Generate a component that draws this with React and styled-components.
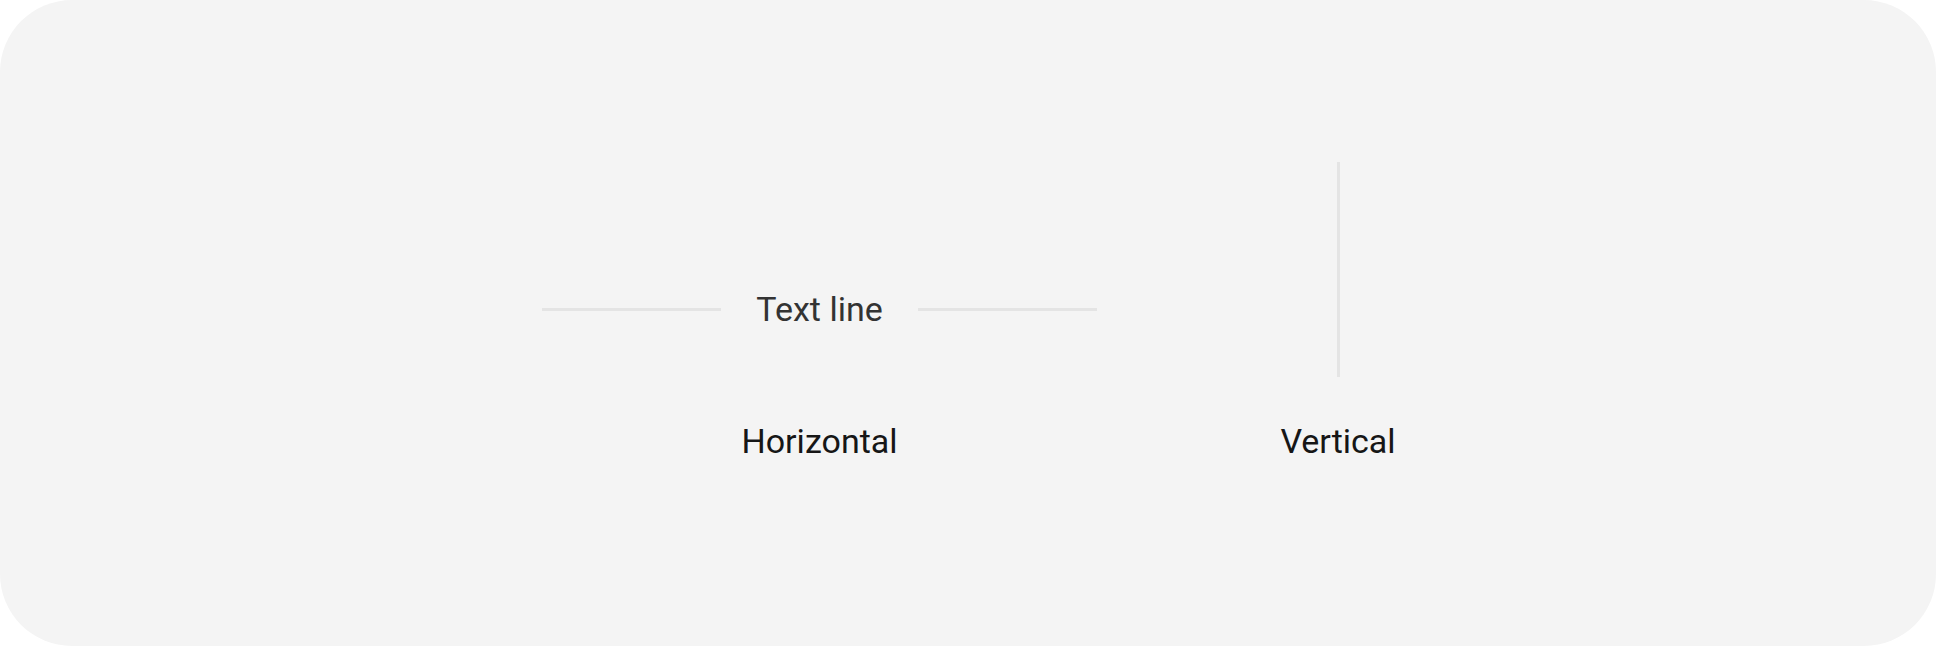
import React from 'react';
import styled, { createGlobalStyle } from 'styled-components';

const GlobalStyle = createGlobalStyle`
  html, body {
    margin: 0;
    padding: 0;
    background: #ffffff;
  }
  body {
    font-family: Roboto, 'Liberation Sans', sans-serif;
  }
`;

const Card = styled.div`
  box-sizing: border-box;
  width: 1936px;
  height: 646px;
  background-color: #f4f4f4;
  border-radius: 72px;
  padding-top: 162px;
  display: flex;
  justify-content: center;
  align-items: flex-start;
`;

const Row = styled.div`
  display: flex;
  align-items: flex-end;
  gap: 185px;
`;

const Column = styled.div`
  display: flex;
  flex-direction: column;
  align-items: center;
  gap: 44px;
  width: ${props => props.width}px;
`;

const Demo = styled.div`
  display: flex;
  align-items: center;
  justify-content: center;
  width: 100%;
  height: ${props => props.height}px;
`;

const Line = styled.div`
  flex: 1;
  height: 3px;
  background-color: #e4e4e4;
`;

const LineText = styled.span`
  padding: 0 35px;
  font-size: 34px;
  line-height: 40px;
  color: #333333;
  white-space: nowrap;
`;

const VerticalLine = styled.div`
  width: 3px;
  height: 100%;
  background-color: #e4e4e4;
`;

const Label = styled.div`
  font-size: 34px;
  line-height: 40px;
  color: #161616;
  white-space: nowrap;
`;

const App = () => (
  <>
    <GlobalStyle />
    <Card>
      <Row>
        <Column width={555}>
          <Demo height={136}>
            <Line />
            <LineText>Text line</LineText>
            <Line />
          </Demo>
          <Label>Horizontal</Label>
        </Column>
        <Column width={112}>
          <Demo height={215}>
            <VerticalLine />
          </Demo>
          <Label>Vertical</Label>
        </Column>
      </Row>
    </Card>
  </>
);

export default App;
